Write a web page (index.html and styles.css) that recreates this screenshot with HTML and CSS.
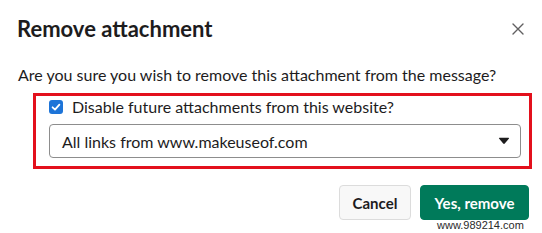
FILE: index.html
```html
<!DOCTYPE html>
<html>
<head>
<meta charset="utf-8">
<link rel="stylesheet" href="styles.css">
</head>
<body>
<div class="modal">
  <div class="header">
    <h1 class="title">Remove attachment</h1>
    <button class="close" aria-label="Close">
      <svg width="12" height="12" viewBox="0 0 12 12"><path d="M1 1L11 11M11 1L1 11" stroke="#616061" stroke-width="1.4" stroke-linecap="round"/></svg>
    </button>
  </div>
  <p class="message">Are you sure you wish to remove this attachment from the message?</p>
  <div class="highlight">
    <label class="check-row">
      <span class="checkbox">
        <svg width="14" height="14" viewBox="0 0 14 14"><rect width="14" height="14" rx="3" fill="#1d74d8"/><path d="M3.6 7.3L6 9.6L10.4 4.6" fill="none" stroke="#fff" stroke-width="1.8" stroke-linecap="round" stroke-linejoin="round"/></svg>
      </span>
      <span class="check-label">Disable future attachments from this website?</span>
    </label>
    <div class="select">
      <span class="select-text">All links from www.makeuseof.com</span>
      <svg class="caret" width="12" height="8" viewBox="0 0 12 8"><path d="M1.6 0.8H10.4Q11.6 0.8 10.8 1.8L6.8 6.6Q6 7.5 5.2 6.6L1.2 1.8Q0.4 0.8 1.6 0.8Z" fill="#1d1c1d"/></svg>
    </div>
  </div>
  <div class="actions">
    <button class="btn btn-cancel">Cancel</button>
    <button class="btn btn-primary">Yes, remove</button>
  </div>
  <div class="watermark">www.989214.com</div>
</div>
</body>
</html>
```
FILE: styles.css
```css
html, body {
  margin: 0;
  padding: 0;
  background: #ffffff;
}
.modal {
  position: relative;
  width: 542px;
  height: 233px;
  box-sizing: border-box;
  padding: 15px 0 0 0;
  font-family: Lato, "Noto Sans", sans-serif;
  color: #1d1c1d;
}
.header {
  display: flex;
  align-items: center;
  justify-content: space-between;
  padding: 0 18px 0 17px;
  height: 28px;
}
.title {
  margin: 0;
  font-size: 22px;
  font-weight: 700;
  line-height: 28px;
}
.close {
  border: 0;
  background: none;
  padding: 0;
  width: 12px;
  height: 12px;
  display: flex;
}
.message {
  margin: 21px 0 0 0;
  padding-left: 18px;
  font-size: 16px;
  line-height: 22px;
}
.highlight {
  margin: 7px 0 0 33px;
  width: 499px;
  box-sizing: border-box;
  border: 3px solid #e3101c;
  padding: 0 8px 8px 13px;
}
.check-row {
  display: flex;
  align-items: center;
  height: 22px;
  font-size: 16px;
  line-height: 22px;
}
.checkbox {
  display: flex;
  width: 14px;
  height: 14px;
  margin-right: 9px;
}
.select {
  margin-top: 6px;
  height: 34px;
  box-sizing: border-box;
  border: 1px solid #8d8d8d;
  border-radius: 4px;
  display: flex;
  align-items: center;
  justify-content: space-between;
  padding: 0 10px 0 12px;
  font-size: 16px;
}
.actions {
  display: flex;
  justify-content: flex-end;
  gap: 9px;
  margin-top: 16px;
  padding-right: 13px;
}
.btn {
  height: 35px;
  box-sizing: border-box;
  border-radius: 4px;
  font-family: Lato, "Noto Sans", sans-serif;
  font-size: 15px;
  font-weight: 700;
  padding: 0 12px;
}
.btn-cancel {
  background: #f8f8f8;
  border: 1px solid #dcdcdc;
  color: #1d1c1d;
  width: 72px;
}
.btn-primary {
  background: #007a5a;
  border: 1px solid #007a5a;
  color: #ffffff;
  width: 109px;
}
.watermark {
  position: absolute;
  left: 437px;
  top: 219px;
  font-family: "Liberation Sans", Arial, sans-serif;
  font-size: 11px;
  line-height: 12px;
  color: #2a2a2a;
}
```
